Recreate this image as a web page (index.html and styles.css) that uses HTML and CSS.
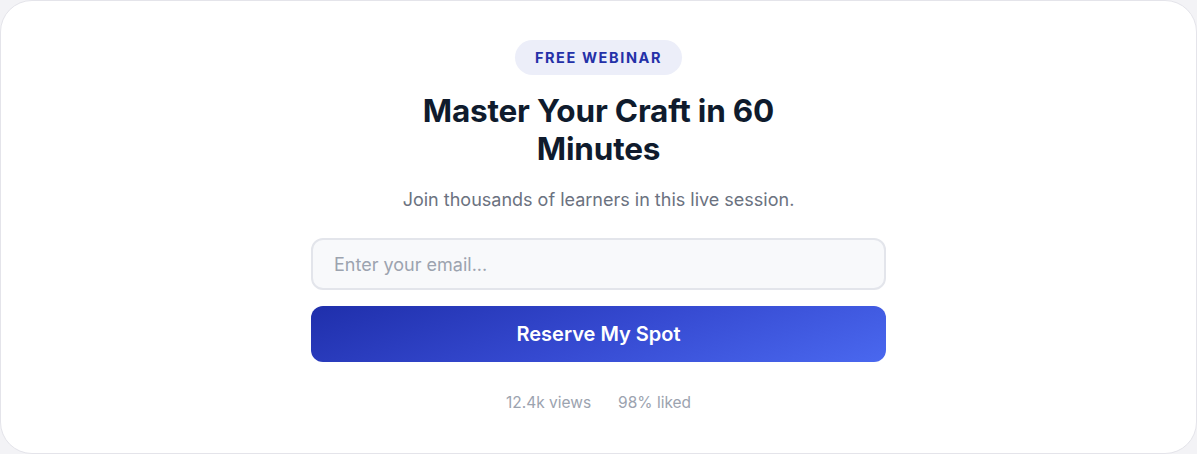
FILE: index.html
```html
<!DOCTYPE html>
<html lang="en">
<head>
<meta charset="utf-8">
<title>Free Webinar</title>
<link rel="stylesheet" href="styles.css">
</head>
<body>
<div class="card">
  <span class="pill">FREE WEBINAR</span>
  <h1 class="title">Master Your Craft in 60 Minutes</h1>
  <p class="subtitle">Join thousands of learners in this live session.</p>
  <form class="form">
    <input class="email" type="email" placeholder="Enter your email...">
    <button class="cta" type="button">Reserve My Spot</button>
  </form>
  <div class="stats">
    <span>12.4k views</span>
    <span>98% liked</span>
  </div>
</div>
</body>
</html>
```

FILE: styles.css
```css
* { box-sizing: border-box; }
html, body { margin: 0; padding: 0; background: #f3f3f6; }
body { font-family: Inter, "Noto Sans", sans-serif; }
.card {
  width: 1197px;
  height: 454px;
  background: #fff;
  border: 1px solid #e4e4ea;
  border-radius: 32px;
  display: flex;
  flex-direction: column;
  align-items: center;
  padding-top: 39px;
}
.pill {
  display: inline-flex;
  align-items: center;
  justify-content: center;
  height: 35px;
  padding: 0 20px;
  border-radius: 18px;
  background: #eceef9;
  color: #2431a8;
  font-size: 14.5px;
  font-weight: 700;
  letter-spacing: 1.6px;
}
.title {
  margin: 17px 0 0;
  max-width: 380px;
  text-align: center;
  font-size: 31.5px;
  line-height: 38px;
  font-weight: 700;
  color: #0f1b2d;
  letter-spacing: -0.2px;
}
.subtitle {
  margin: 19px 0 0;
  font-size: 18px;
  line-height: 26px;
  color: #6b7280;
}
.form {
  margin-top: 25px;
  width: 575px;
  display: flex;
  flex-direction: column;
  gap: 16px;
}
.email {
  height: 52px;
  border: 2px solid #e3e5eb;
  border-radius: 12px;
  background: #f8f9fb;
  padding: 0 21px;
  font-family: inherit;
  font-size: 18px;
  color: #111827;
  outline: none;
}
.email::placeholder { color: #9ca3af; }
.cta {
  height: 56px;
  border: none;
  border-radius: 12px;
  background: linear-gradient(160deg, #1f2fab 0%, #3549d0 50%, #4a68ef 100%);
  color: #fff;
  font-family: inherit;
  font-size: 20px;
  font-weight: 600;
  cursor: pointer;
}
.stats {
  margin-top: 31px;
  display: flex;
  gap: 27px;
  font-size: 15.5px;
  line-height: 20px;
  color: #9ca3af;
}
```
